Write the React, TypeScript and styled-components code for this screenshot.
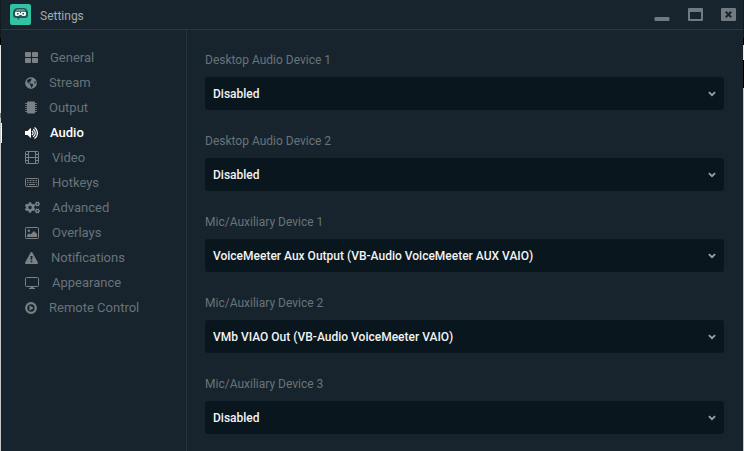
import React, { useState } from "react";
import styled, { createGlobalStyle } from "styled-components";
import { FaCogs, FaGlobeAmericas } from "react-icons/fa";

const GlobalStyle = createGlobalStyle`
  *, *::before, *::after { box-sizing: border-box; }
  body {
    margin: 0;
    background: #17242d;
    font-family: Roboto, "Liberation Sans", sans-serif;
  }
`;

const Window = styled.div`
  display: flex;
  flex-direction: column;
  min-height: 100vh;
  position: relative;
  background: #17242d;
  color: #6e777c;
`;

const Edge = styled.div<{ $side: "left" | "right" }>`
  position: absolute;
  top: 0;
  bottom: 0;
  ${(p) => p.$side}: 0;
  width: 1px;
  background: ${(p) =>
    p.$side === "left"
      ? "linear-gradient(#101a21 0 38px, #000 38px 45px, #e4e6e7 45px 113px, #7d8285 113px 118px, #c3c7c9 118px)"
      : "linear-gradient(#101a21 0 38px, #000 38px 45px, #e4e6e7 45px 60px, #000 60px 88px, #c3c7c9 88px)"};
`;

const TitleBar = styled.header`
  display: flex;
  align-items: center;
  height: 30px;
  padding: 0 8px 0 10px;
  border-bottom: 1px solid #2b383f;
`;

const Title = styled.h1`
  flex: 1;
  margin: 2px 0 0 9px;
  font-size: 12px;
  line-height: 20px;
  font-weight: 400;
  color: #a3a9ac;
`;

const WindowButtons = styled.div`
  display: flex;
  gap: 18px;
`;

const WindowButton = styled.button`
  display: flex;
  padding: 0;
  border: 0;
  background: none;
  color: #717a80;
  cursor: pointer;
`;

const Body = styled.div`
  display: flex;
  flex: 1;
`;

const Sidebar = styled.nav`
  flex: 0 0 187px;
  padding-top: 15px;
  border-right: 1px solid #26333b;
`;

const NavList = styled.ul`
  margin: 0;
  padding: 0;
  list-style: none;
`;

const NavButton = styled.button<{ $active: boolean }>`
  display: flex;
  align-items: center;
  gap: 12px;
  width: 100%;
  height: 25px;
  padding: 0 0 0 25px;
  border: 0;
  background: ${(p) =>
    p.$active ? "linear-gradient(#fff, #fff) left center / 2px 20px no-repeat" : "none"};
  font: inherit;
  font-size: 13px;
  font-weight: ${(p) => (p.$active ? 500 : 400)};
  color: ${(p) => (p.$active ? "#ffffff" : "#69737a")};
  text-align: left;
  cursor: pointer;

  svg {
    flex: none;
    color: ${(p) => (p.$active ? "#ffffff" : "#7b8184")};
  }
`;

const Form = styled.form`
  display: flex;
  flex-direction: column;
  flex: 1;
  min-width: 0;
  gap: 21px;
  padding: 20px 20px 16px 18px;
`;

const Field = styled.div`
  display: flex;
  flex-direction: column;
  gap: 7px;
`;

const Label = styled.label`
  font-size: 12px;
  line-height: 20px;
  color: #69737a;
`;

const SelectBox = styled.div`
  display: grid;
  align-items: center;

  > * {
    grid-area: 1 / 1;
  }

  svg {
    justify-self: end;
    margin-right: 8px;
    pointer-events: none;
  }
`;

const Select = styled.select`
  appearance: none;
  width: 100%;
  height: 33px;
  padding: 0 24px 0 8px;
  border: 0;
  border-radius: 3px;
  background: #09161d;
  font: inherit;
  font-size: 12px;
  font-weight: 500;
  color: #f2f3f4;
  cursor: pointer;
`;

const Logo = () => (
  <svg width="21" height="21" viewBox="0 0 21 21" aria-hidden="true">
    <rect width="21" height="21" rx="2" fill="#31c3a2" />
    <path
      d="M7 4h7a4 4 0 0 1 3.400 2.500L18 8v3a3 3 0 0 1-3 3h-5l-2.300 2v-2H6a3 3 0 0 1-3-3V8l.600-1.500A4 4 0 0 1 7 4Z"
      fill="#27525a"
    />
    <path d="M7 5.300h7l1.600 1.400H5.400Z" fill="#5fae9f" />
    <path
      d="M6 7.700h9a1 1 0 0 1 1 1v1.800a1.500 1.500 0 0 1-1.500 1.500h-2l-1.300-1h-1.400l-1.300 1h-2A1.500 1.500 0 0 1 5 10.500V8.700a1 1 0 0 1 1-1Z"
      fill="#f3fbfa"
    />
    <path d="M7 9h1.500v1.500H7ZM12.500 9H14v1.500h-1.500ZM10 8h1v1.300h-1Z" fill="#27525a" />
  </svg>
);

const GridIcon = () => (
  <svg width="13" height="11" viewBox="0 0 13 11" fill="currentColor" aria-hidden="true">
    <rect width="6" height="5" rx="0.800" />
    <rect x="7" width="6" height="5" rx="0.800" />
    <rect y="6" width="6" height="5" rx="0.800" />
    <rect x="7" y="6" width="6" height="5" rx="0.800" />
  </svg>
);

const ChipIcon = () => (
  <svg width="12" height="13" viewBox="0 0 12 13" fill="currentColor" aria-hidden="true">
    <rect x="2" y="0.500" width="8" height="12" rx="0.800" />
    <path d="M0 2h12v1H0ZM0 4h12v1H0ZM0 6h12v1H0ZM0 8h12v1H0ZM0 10h12v1H0Z" opacity="0.800" />
  </svg>
);

const SpeakerIcon = () => (
  <svg width="13" height="12" viewBox="0 0 13 12" aria-hidden="true">
    <path d="M0 4h2.500L6 0.800v10.400L2.500 8H0Z" fill="currentColor" />
    <path
      d="M7.300 4.300a2.200 2.200 0 0 1 0 3.400M8.500 2.500a4.300 4.300 0 0 1 0 7M9.800 0.800a6.400 6.400 0 0 1 0 10.400"
      fill="none"
      stroke="currentColor"
      strokeWidth="1.200"
      strokeLinecap="round"
    />
  </svg>
);

const FilmIcon = () => (
  <svg width="15" height="13" viewBox="0 0 15 13" fill="none" stroke="currentColor" aria-hidden="true">
    <rect x="0.500" y="0.500" width="13" height="12" rx="1" />
    <path d="M3.500 0.500v12M10.500 0.500v12M3.500 6.500h7M0.500 3.500h3M0.500 6.500h3M0.500 9.500h3M10.500 3.500h3M10.500 6.500h3M10.500 9.500h3" />
  </svg>
);

const KeyboardIcon = () => (
  <svg width="15" height="9" viewBox="0 0 15 9" fill="none" stroke="currentColor" aria-hidden="true">
    <rect x="0.500" y="0.500" width="13" height="8" rx="0.800" />
    <path d="M2 2.500h10M2 4.500h10" strokeDasharray="1 0.500" />
    <path d="M2 6.500h1M4 6.500h6M11 6.500h1" />
  </svg>
);

const PictureIcon = () => (
  <svg width="15" height="12" viewBox="0 0 15 12" aria-hidden="true">
    <rect x="0.500" y="0.500" width="13" height="11" rx="0.800" fill="none" stroke="currentColor" />
    <circle cx="3.800" cy="3.800" r="1.200" fill="currentColor" />
    <path d="M2 10V8.200L4 6.200l1.500 1.300L9 4l3 3v3Z" fill="currentColor" />
  </svg>
);

const WarningIcon = () => (
  <svg width="14" height="12" viewBox="0 0 14 12" aria-hidden="true">
    <path
      d="M6.500 0a1 1 0 0 1 .900.500l5.500 10a1 1 0 0 1-.900 1.500H1a1 1 0 0 1-.900-1.500l5.500-10A1 1 0 0 1 6.500 0ZM5.500 4l.300 3.800h1.400L7.500 4ZM5.700 8.700v1.500h1.600V8.700Z"
      fill="currentColor"
      fillRule="evenodd"
    />
  </svg>
);

const MonitorIcon = () => (
  <svg width="15" height="12" viewBox="0 0 15 12" aria-hidden="true">
    <rect x="0.500" y="0.500" width="13" height="9" rx="1" fill="none" stroke="currentColor" />
    <path d="M5.500 9.500h3V11h1.500v1H4v-1h1.500Z" fill="currentColor" />
  </svg>
);

const PlayIcon = () => (
  <svg width="12" height="12" viewBox="0 0 12 12" aria-hidden="true">
    <circle cx="6" cy="6" r="4.800" fill="none" stroke="currentColor" strokeWidth="2.200" />
    <path d="M4.500 3.300 8.700 6 4.500 8.700Z" fill="currentColor" />
  </svg>
);

const Chevron = () => (
  <svg width="8" height="6" viewBox="0 0 8 6" fill="none" stroke="#9aa2a6" strokeWidth="1.800" aria-hidden="true">
    <path d="M0.900 1.200 4 4.200l3.100-3" />
  </svg>
);

const MinimizeIcon = () => (
  <svg width="16" height="14" viewBox="0 0 16 14" fill="currentColor" aria-hidden="true">
    <rect x="0.500" y="9" width="15" height="4" rx="1" />
  </svg>
);

const MaximizeIcon = () => (
  <svg width="15" height="13" viewBox="0 0 15 13" aria-hidden="true">
    <path
      d="M1 0h13a1 1 0 0 1 1 1v11a1 1 0 0 1-1 1H1a1 1 0 0 1-1-1V1a1 1 0 0 1 1-1ZM2 4v7h11V4Z"
      fill="currentColor"
      fillRule="evenodd"
    />
  </svg>
);

const CloseIcon = () => (
  <svg width="15" height="13" viewBox="0 0 15 13" aria-hidden="true">
    <rect width="15" height="13" rx="1" fill="currentColor" />
    <path d="m4.800 3.800 5.400 5.400M10.200 3.800 4.800 9.200" stroke="#17242d" strokeWidth="2" />
  </svg>
);

const sections = [
  { name: "General", icon: <GridIcon /> },
  { name: "Stream", icon: <FaGlobeAmericas size={12} /> },
  { name: "Output", icon: <ChipIcon /> },
  { name: "Audio", icon: <SpeakerIcon /> },
  { name: "Video", icon: <FilmIcon /> },
  { name: "Hotkeys", icon: <KeyboardIcon /> },
  { name: "Advanced", icon: <FaCogs size={15} /> },
  { name: "Overlays", icon: <PictureIcon /> },
  { name: "Notifications", icon: <WarningIcon /> },
  { name: "Appearance", icon: <MonitorIcon /> },
  { name: "Remote Control", icon: <PlayIcon /> },
];

const aux = "VoiceMeeter Aux Output (VB-Audio VoiceMeeter AUX VAIO)";
const vmb = "VMb VIAO Out (VB-Audio VoiceMeeter VAIO)";

const devices = [
  { id: "desktop-1", label: "Desktop Audio Device 1", value: "Disabled" },
  { id: "desktop-2", label: "Desktop Audio Device 2", value: "Disabled" },
  { id: "mic-1", label: "Mic/Auxiliary Device 1", value: aux },
  { id: "mic-2", label: "Mic/Auxiliary Device 2", value: vmb },
  { id: "mic-3", label: "Mic/Auxiliary Device 3", value: "Disabled" },
];

export default function App() {
  const [active, setActive] = useState("Audio");

  return (
    <Window>
      <GlobalStyle />
      <Edge $side="left" />
      <Edge $side="right" />
      <TitleBar>
        <Logo />
        <Title>Settings</Title>
        <WindowButtons>
          <WindowButton type="button" aria-label="Minimize">
            <MinimizeIcon />
          </WindowButton>
          <WindowButton type="button" aria-label="Maximize">
            <MaximizeIcon />
          </WindowButton>
          <WindowButton type="button" aria-label="Close">
            <CloseIcon />
          </WindowButton>
        </WindowButtons>
      </TitleBar>
      <Body>
        <Sidebar aria-label="Settings sections">
          <NavList>
            {sections.map((s) => (
              <li key={s.name}>
                <NavButton
                  type="button"
                  $active={s.name === active}
                  aria-current={s.name === active ? "page" : undefined}
                  onClick={() => setActive(s.name)}
                >
                  {s.icon}
                  {s.name}
                </NavButton>
              </li>
            ))}
          </NavList>
        </Sidebar>
        <Form>
          {devices.map((d) => (
            <Field key={d.id}>
              <Label htmlFor={d.id}>{d.label}</Label>
              <SelectBox>
                <Select id={d.id} defaultValue={d.value}>
                  <option>Disabled</option>
                  <option>{aux}</option>
                  <option>{vmb}</option>
                </Select>
                <Chevron />
              </SelectBox>
            </Field>
          ))}
        </Form>
      </Body>
    </Window>
  );
}
